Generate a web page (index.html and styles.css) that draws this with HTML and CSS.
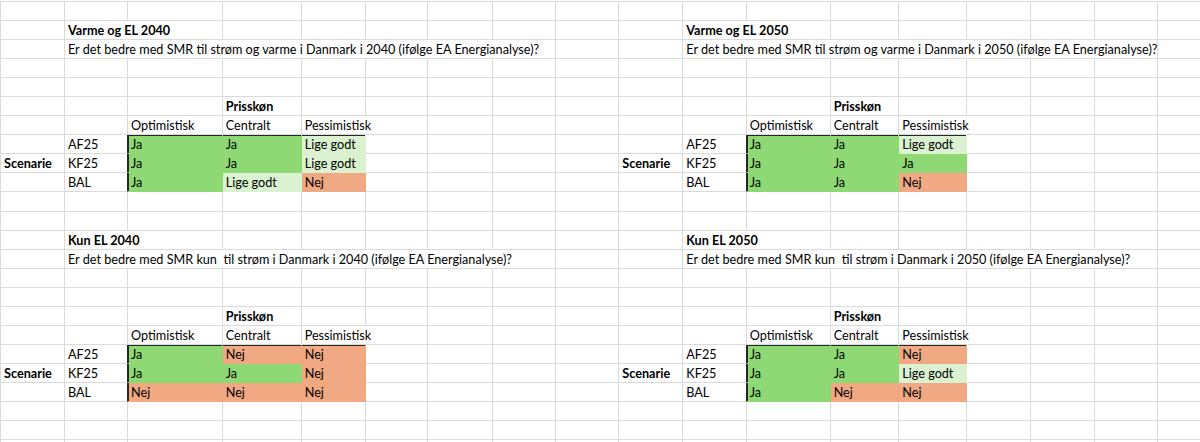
FILE: index.html
```html
<!DOCTYPE html>
<html lang="da">
<head>
<meta charset="utf-8">
<title>SMR – Varme og EL</title>
<link rel="stylesheet" href="styles.css">
</head>
<body>
<table class="sheet">
<colgroup>
<col class="w64"><col class="w63"><col class="wC"><col class="wD"><col class="w64"><col class="wF"><col class="wG"><col class="w63"><col class="wI">
<col class="w64"><col class="wK"><col class="wL"><col class="wM"><col class="wN"><col class="wO"><col class="wO"><col class="wI"><col class="w64">
</colgroup>
<tbody>
<tr><td></td><td></td><td></td><td></td><td></td><td></td><td></td><td></td><td></td><td></td><td></td><td></td><td></td><td></td><td></td><td></td><td></td><td></td></tr>
<tr><td></td><td colspan="2" class="b">Varme og EL 2040</td><td></td><td></td><td></td><td></td><td></td><td></td><td></td><td colspan="2" class="b">Varme og EL 2050</td><td></td><td></td><td></td><td></td><td></td><td></td></tr>
<tr><td></td><td colspan="7" class="q">Er det bedre med SMR til strøm og varme i Danmark i 2040 (ifølge EA Energianalyse)?</td><td></td><td></td><td colspan="7" class="q">Er det bedre med SMR til strøm og varme i Danmark i 2050 (ifølge EA Energianalyse)?</td><td></td></tr>
<tr><td></td><td></td><td></td><td></td><td></td><td></td><td></td><td></td><td></td><td></td><td></td><td></td><td></td><td></td><td></td><td></td><td></td><td></td></tr>
<tr><td></td><td></td><td></td><td></td><td></td><td></td><td></td><td></td><td></td><td></td><td></td><td></td><td></td><td></td><td></td><td></td><td></td><td></td></tr>
<tr><td></td><td></td><td></td><td class="b">Prisskøn</td><td></td><td></td><td></td><td></td><td></td><td></td><td></td><td></td><td class="b">Prisskøn</td><td></td><td></td><td></td><td></td><td></td></tr>
<tr><td></td><td></td><td>Optimistisk</td><td>Centralt</td><td colspan="2">Pessimistisk</td><td></td><td></td><td></td><td></td><td></td><td>Optimistisk</td><td>Centralt</td><td colspan="2">Pessimistisk</td><td></td><td></td><td></td></tr>
<tr><td></td><td class="lbl">AF25</td><td class="g t l">Ja</td><td class="g t">Ja</td><td class="lg t">Lige godt</td><td></td><td></td><td></td><td></td><td></td><td class="lbl">AF25</td><td class="g t l">Ja</td><td class="g t">Ja</td><td class="lg t">Lige godt</td><td></td><td></td><td></td><td></td></tr>
<tr><td class="b">Scenarie</td><td class="lbl">KF25</td><td class="g l">Ja</td><td class="g">Ja</td><td class="lg">Lige godt</td><td></td><td></td><td></td><td></td><td class="b">Scenarie</td><td class="lbl">KF25</td><td class="g l">Ja</td><td class="g">Ja</td><td class="g">Ja</td><td></td><td></td><td></td><td></td></tr>
<tr><td></td><td class="lbl">BAL</td><td class="g l">Ja</td><td class="lg">Lige godt</td><td class="s">Nej</td><td></td><td></td><td></td><td></td><td></td><td class="lbl">BAL</td><td class="g l">Ja</td><td class="g">Ja</td><td class="s">Nej</td><td></td><td></td><td></td><td></td></tr>
<tr><td></td><td></td><td></td><td></td><td></td><td></td><td></td><td></td><td></td><td></td><td></td><td></td><td></td><td></td><td></td><td></td><td></td><td></td></tr>
<tr><td></td><td></td><td></td><td></td><td></td><td></td><td></td><td></td><td></td><td></td><td></td><td></td><td></td><td></td><td></td><td></td><td></td><td></td></tr>
<tr><td></td><td colspan="2" class="b">Kun EL 2040</td><td></td><td></td><td></td><td></td><td></td><td></td><td></td><td colspan="2" class="b">Kun EL 2050</td><td></td><td></td><td></td><td></td><td></td><td></td></tr>
<tr><td></td><td colspan="7" class="q">Er det bedre med SMR kun  til strøm i Danmark i 2040 (ifølge EA Energianalyse)?</td><td></td><td></td><td colspan="7" class="q">Er det bedre med SMR kun  til strøm i Danmark i 2050 (ifølge EA Energianalyse)?</td><td></td></tr>
<tr><td></td><td></td><td></td><td></td><td></td><td></td><td></td><td></td><td></td><td></td><td></td><td></td><td></td><td></td><td></td><td></td><td></td><td></td></tr>
<tr><td></td><td></td><td></td><td></td><td></td><td></td><td></td><td></td><td></td><td></td><td></td><td></td><td></td><td></td><td></td><td></td><td></td><td></td></tr>
<tr><td></td><td></td><td></td><td class="b">Prisskøn</td><td></td><td></td><td></td><td></td><td></td><td></td><td></td><td></td><td class="b">Prisskøn</td><td></td><td></td><td></td><td></td><td></td></tr>
<tr><td></td><td></td><td>Optimistisk</td><td>Centralt</td><td colspan="2">Pessimistisk</td><td></td><td></td><td></td><td></td><td></td><td>Optimistisk</td><td>Centralt</td><td colspan="2">Pessimistisk</td><td></td><td></td><td></td></tr>
<tr><td></td><td class="lbl">AF25</td><td class="g t l">Ja</td><td class="s t">Nej</td><td class="s t">Nej</td><td></td><td></td><td></td><td></td><td></td><td class="lbl">AF25</td><td class="g t l">Ja</td><td class="g t">Ja</td><td class="s t">Nej</td><td></td><td></td><td></td><td></td></tr>
<tr><td class="b">Scenarie</td><td class="lbl">KF25</td><td class="g l">Ja</td><td class="g">Ja</td><td class="s">Nej</td><td></td><td></td><td></td><td></td><td class="b">Scenarie</td><td class="lbl">KF25</td><td class="g l">Ja</td><td class="g">Ja</td><td class="lg">Lige godt</td><td></td><td></td><td></td><td></td></tr>
<tr><td></td><td class="lbl">BAL</td><td class="s l">Nej</td><td class="s">Nej</td><td class="s">Nej</td><td></td><td></td><td></td><td></td><td></td><td class="lbl">BAL</td><td class="g l">Ja</td><td class="s">Nej</td><td class="s">Nej</td><td></td><td></td><td></td><td></td></tr>
<tr><td></td><td></td><td></td><td></td><td></td><td></td><td></td><td></td><td></td><td></td><td></td><td></td><td></td><td></td><td></td><td></td><td></td><td></td></tr>
<tr><td></td><td></td><td></td><td></td><td></td><td></td><td></td><td></td><td></td><td></td><td></td><td></td><td></td><td></td><td></td><td></td><td></td><td></td></tr>
<tr><td></td><td></td><td></td><td></td><td></td><td></td><td></td><td></td><td></td><td></td><td></td><td></td><td></td><td></td><td></td><td></td><td></td><td></td></tr>
</tbody>
</table>
</body>
</html>
```

FILE: styles.css
```css
html, body {
  margin: 0;
  padding: 0;
  background: #ffffff;
  overflow: hidden;
}

.sheet {
  border-collapse: separate;
  border-spacing: 0;
  table-layout: fixed;
  width: 1222.3px;
  margin-top: 1px;
  border-top: 1px solid #dadada;
  border-left: 1px solid #dadada;
  font-family: "Lato", "Liberation Sans", sans-serif;
  font-size: 12.65px;
  color: #000000;
}

.w64 { width: 64px; }
.w63 { width: 63px; }
.wC { width: 94.7px; }
.wD { width: 79px; }
.wF { width: 62.3px; }
.wG { width: 64.7px; }
.wI { width: 63.6px; }
.wK { width: 63.4px; }
.wL { width: 84px; }
.wM { width: 68.6px; }
.wN { width: 68px; }
.wO { width: 63.7px; }

.sheet tr {
  height: 19.06px;
}

.sheet td {
  box-sizing: border-box;
  height: 19.06px;
  padding: 1px 3px 0 3px;
  border-right: 1px solid #dadada;
  border-bottom: 1px solid #dadada;
  white-space: pre;
  vertical-align: middle;
  line-height: 15px;
}

.sheet td.q {
  padding-right: 0;
}

.sheet td.b {
  font-weight: 700;
}

.sheet td.lbl {
  border-right-color: #262626;
}

.sheet td.g {
  background: #8ed973;
  border-color: #8ed973;
}

.sheet td.lg {
  background: #daf2d0;
  border-color: #daf2d0;
}

.sheet td.s {
  background: #f1a983;
  border-color: #f1a983;
}

.sheet td.t {
  box-shadow: inset 0 1px 0 #262626;
}

.sheet td.l {
  box-shadow: inset 1px 0 0 #262626;
}

.sheet td.t.l {
  box-shadow: inset 1px 1px 0 #262626;
}
```
